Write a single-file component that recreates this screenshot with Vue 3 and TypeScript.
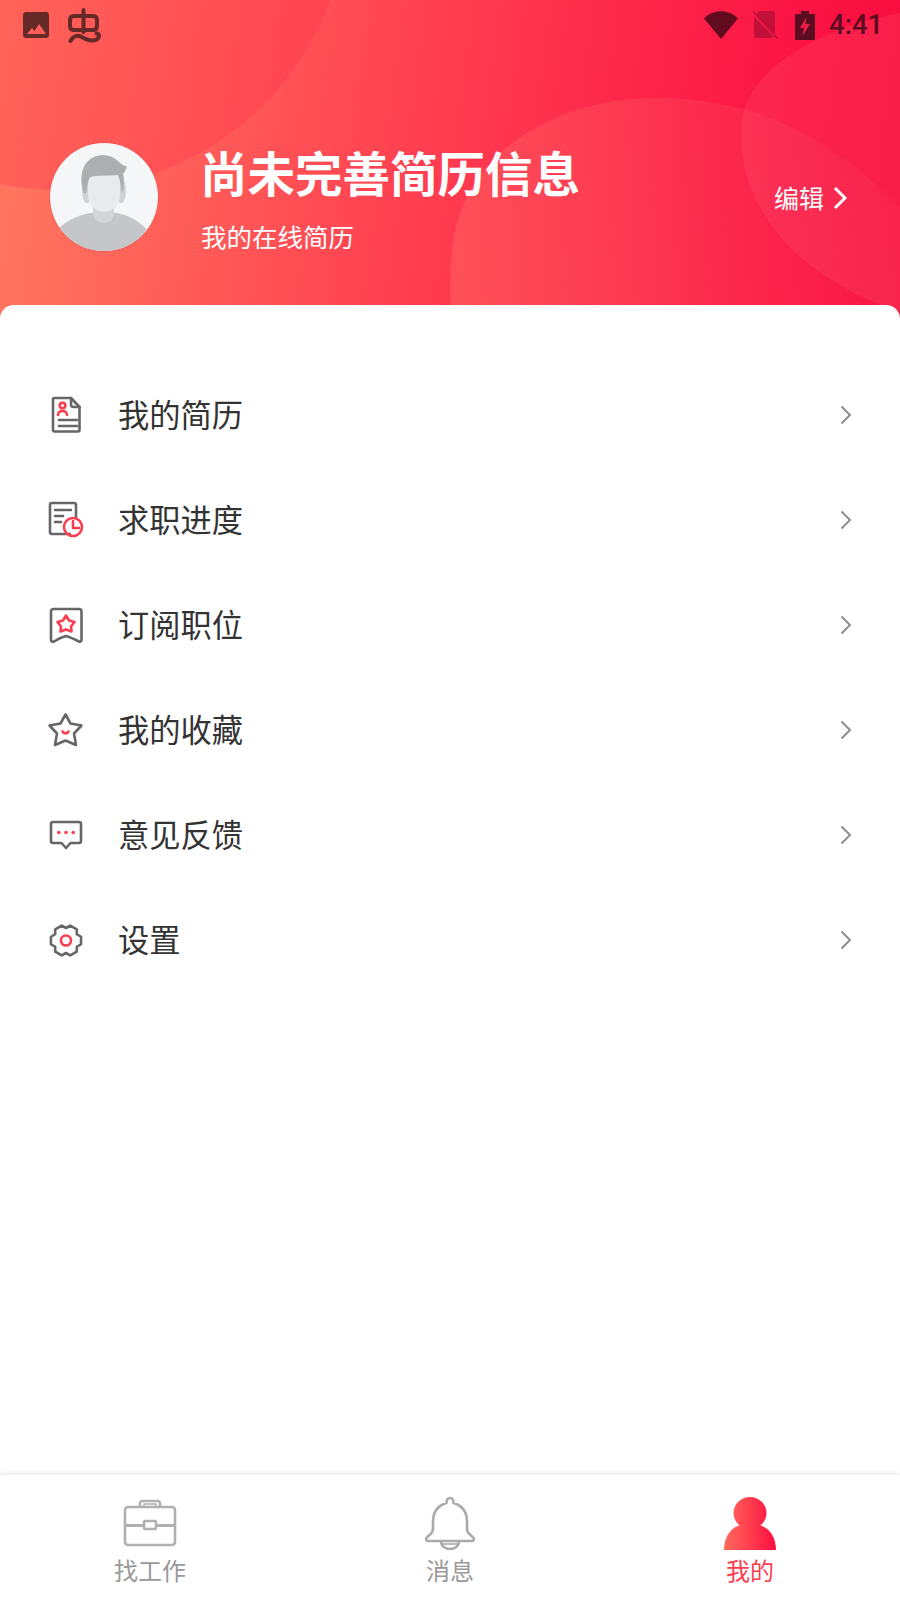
<script setup lang="ts">
const menu = [
  { key: 'resume', label: '我的简历' },
  { key: 'progress', label: '求职进度' },
  { key: 'subscribe', label: '订阅职位' },
  { key: 'favorite', label: '我的收藏' },
  { key: 'feedback', label: '意见反馈' },
  { key: 'settings', label: '设置' },
];

// six-tooth gear outline
const gearPath = (() => {
  const pts: string[] = [];
  for (let i = 0; i < 6; i++) {
    const a = i * 60;
    for (const [da, r] of [[-14, 15.5], [14, 15.5], [30, 12.5]]) {
      const rad = ((a + da) * Math.PI) / 180;
      pts.push(`${(20 + r * Math.cos(rad)).toFixed(2)} ${(20.5 + r * Math.sin(rad)).toFixed(2)}`);
    }
  }
  return 'M' + pts.join('L') + 'Z';
})();
</script>

<template>
  <div class="page">
    <header class="header">
      <svg class="blobs" width="900" height="320" viewBox="0 0 900 320">
        <defs>
          <linearGradient id="blobB" x1="0" y1="0.6" x2="1" y2="0.4">
            <stop offset="0" stop-color="#ff8a70" stop-opacity="0.28" />
            <stop offset="1" stop-color="#ff8a80" stop-opacity="0.05" />
          </linearGradient>
        </defs>
        <circle cx="58" cy="-100" r="290" fill="#ff2a4c" fill-opacity="0.28" />
        <path d="M452 320C446 250 452 190 510 145C570 98 650 88 735 107C800 122 860 165 900 208V320Z" fill="url(#blobB)" />
        <path d="M900 13C830 26 760 60 744 110C732 170 760 225 810 265C840 288 870 302 900 312Z" fill="#ff8a90" fill-opacity="0.13" />
      </svg>

      <div class="status">
        <svg class="st-image" width="26" height="26" viewBox="0 0 26 26">
          <path d="M3 0H23A3 3 0 0 1 26 3V23A3 3 0 0 1 23 26H3A3 3 0 0 1 0 23V3A3 3 0 0 1 3 0ZM4 22H23L16 12L11.500 19L9 16Z" fill="#652a28" fill-rule="evenodd" />
        </svg>
        <svg class="st-logo" width="34" height="36" viewBox="0 0 34 36">
          <g fill="none" stroke="#652a28" stroke-width="4" stroke-linecap="round" stroke-linejoin="round">
            <path d="M15.500 2V24" />
            <path d="M6 8H25C27.500 8 29 9.500 29 12V18C29 20.500 27.500 22 25 22H6C3.500 22 2 20.500 2 18V12C2 9.500 3.500 8 6 8Z" />
            <path d="M2.500 33C5 28.500 9 26.500 13 28.500C18 31.500 24 34 28.500 31.500C32 29.500 31.500 25.500 28.500 25.500" />
          </g>
        </svg>
        <span class="st-spacer"></span>
        <svg width="34" height="28" viewBox="0 0 34 28">
          <path d="M0 7.500C9.500 -2.200 24.500 -2.200 34 7.500L17 28Z" fill="#620b1f" />
        </svg>
        <svg class="st-sim" width="26" height="30" viewBox="0 0 26 30">
          <path d="M7 1H19A3 3 0 0 1 22 4V24L3 5.500L4.500 3A3 3 0 0 1 7 1ZM1 6.500L20 26C19.500 27 18.500 28 18 28H4A3 3 0 0 1 1 25Z" fill="#c1103a" />
          <path d="M0 1L25 29" stroke="#c1103a" stroke-width="1.500" />
        </svg>
        <svg class="st-batt" width="20" height="29" viewBox="0 0 20 29">
          <path d="M6 0H14V3H19A1 1 0 0 1 20 4V28A1 1 0 0 1 19 29H1A1 1 0 0 1 0 28V4A1 1 0 0 1 1 3H6Z" fill="#5a0d20" />
          <path d="M11.500 6L5 17H9L7.500 25L15 13H10.500Z" fill="#ef1c48" />
        </svg>
        <span class="st-time">4:41</span>
      </div>

      <div class="profile">
        <div class="avatar">
          <svg width="108" height="108" viewBox="0 0 108 108">
            <defs>
              <clipPath id="avatarClip"><circle cx="54" cy="54" r="54" /></clipPath>
            </defs>
            <g clip-path="url(#avatarClip)">
              <rect width="108" height="108" fill="#f4f6f8" />
              <path d="M10 84C24 72 38 70 54 68C72 70 86 74 98 88V108H10Z" fill="#c4c6c9" />
              <path d="M43 60H64V70C64 76 59 80 54 80C48 80 43 76 43 70Z" fill="#d4d5d7" />
              <ellipse cx="37" cy="48" rx="5" ry="12" fill="#d0d1d3" />
              <ellipse cx="71" cy="48" rx="5" ry="12" fill="#d0d1d3" />
              <path d="M38 28H70V52C70 62 62 69 54 69C46 69 38 62 38 52Z" fill="#e9eaec" />
              <path d="M34 50C30 40 30 26 38 18C46 10 60 10 68 18C71 21 75 24 77 23C76 27 74 30 73 31C75 38 74 46 72 50C71 44 70 36 68 32C60 33 46 32 40 34C38 38 37 44 36 50Z" fill="#adaeb0" />
            </g>
          </svg>
        </div>
        <div class="profile-text">
          <div class="title">尚未完善简历信息</div>
          <div class="sub">我的在线简历</div>
        </div>
        <div class="edit">
          <span class="edit-label">编辑</span>
          <svg width="14" height="24" viewBox="0 0 14 24">
            <path d="M2 2L12 12L2 22" fill="none" stroke="#fff" stroke-width="3" />
          </svg>
        </div>
      </div>
    </header>

    <main class="card">
      <div v-for="item in menu" :key="item.key" class="row">
        <svg class="row-icon" width="40" height="40" viewBox="0 0 40 40" fill="none" stroke="#666" stroke-width="2.600" stroke-linecap="round" stroke-linejoin="round">
          <template v-if="item.key === 'resume'">
            <path d="M25 3H8.500A1.500 1.500 0 0 0 7 4.500V35A1.500 1.500 0 0 0 8.500 36.500H32A1.500 1.500 0 0 0 33.500 35V12Z" />
            <path d="M25 3V9.500A2.500 2.500 0 0 0 27.500 12H33.500" />
            <path d="M13 25H31M13 31H31" />
            <circle cx="16.500" cy="10.500" r="2.800" stroke="#fa3e50" />
            <path d="M12 20C12 14.500 21 14.500 21 20" stroke="#fa3e50" />
          </template>
          <template v-else-if="item.key === 'progress'">
            <path d="M24 34H6A2 2 0 0 1 4 32V5A2 2 0 0 1 6 3H28A2 2 0 0 1 30 5V18" />
            <path d="M9 10H25M9 16H17M9 22H15" />
            <circle cx="27" cy="27" r="9" stroke="#fa3e50" />
            <path d="M27 21V28H33" stroke="#fa3e50" />
          </template>
          <template v-else-if="item.key === 'subscribe'">
            <path d="M8 4H33A2.500 2.500 0 0 1 35.500 6.500V35C35.500 36.500 34 37 33 36.500C29 34.500 24 32 20 31C16 32 11 34.500 8 36.500C6.500 37 5 36.500 5 35V6.500A2.500 2.500 0 0 1 8 4Z" />
            <path d="M20 10.500L23 15.500L28.500 17L25 21.500L25.500 26.500L20 24.500L14.500 26.500L15 21.500L11.500 17L17 15.500Z" stroke="#fa3e50" />
          </template>
          <template v-else-if="item.key === 'favorite'">
            <path d="M19.500 4.500L24.500 13.500L35.500 15.500L28 23.500L30 35L19.500 30.500L9 35L11 23.500L3.500 15.500L14.500 13.500Z" />
            <path d="M16.500 21.500C17.500 24 21.500 24 22.500 21.500" stroke="#fa3e50" />
          </template>
          <template v-else-if="item.key === 'feedback'">
            <path d="M7 7H33A2 2 0 0 1 35 9V26A2 2 0 0 1 33 28H24.500L20 33L15.500 28H7A2 2 0 0 1 5 26V9A2 2 0 0 1 7 7Z" />
            <g fill="#fa3e50" stroke="none">
              <circle cx="12.800" cy="17.500" r="1.800" />
              <circle cx="20" cy="17.500" r="1.800" />
              <circle cx="27.200" cy="17.500" r="1.800" />
            </g>
          </template>
          <template v-else>
            <path :d="gearPath" />
            <circle cx="20" cy="20.500" r="5" stroke="#fa3e50" />
          </template>
        </svg>
        <span class="row-label">{{ item.label }}</span>
        <svg class="row-arrow" width="12" height="20" viewBox="0 0 12 20">
          <path d="M1.500 1.500L10 10L1.500 18.500" fill="none" stroke="#8d8d8d" stroke-width="2" />
        </svg>
      </div>
    </main>

    <nav class="tabbar">
      <div class="tab">
        <svg width="56" height="54" viewBox="0 0 56 54" fill="none" stroke="#b0b0b0" stroke-width="2.600" stroke-linejoin="round">
          <path d="M6 11H50A3 3 0 0 1 53 14V46A3 3 0 0 1 50 49H6A3 3 0 0 1 3 46V14A3 3 0 0 1 6 11Z" />
          <path d="M3 29.500H22M34 29.500H53" stroke-width="3" />
          <rect x="22" y="25" width="12" height="8" rx="1" />
          <path d="M18 11V7.500A2.500 2.500 0 0 1 20.500 5H35.500A2.500 2.500 0 0 1 38 7.500V11" />
          <rect x="22" y="8" width="12" height="3" stroke-width="1.400" />
        </svg>
        <span class="tab-label">找工作</span>
      </div>
      <div class="tab">
        <svg width="56" height="54" viewBox="0 0 56 54" fill="none" stroke="#aaa" stroke-width="2.600" stroke-linejoin="round">
          <path d="M28 2C25.500 2 24.500 4 24.500 7C16 9.500 11 16 11 26V33C11 38 6 39 4.500 42C3.500 44 4.500 45 6.500 45H49.500C51.500 45 52.500 44 51.500 42C50 39 45 38 45 33V26C45 16 40 9.500 31.500 7C31.500 4 30.500 2 28 2Z" />
          <path d="M19 45C19 50 23 53 28 53C33 53 37 50 37 45" />
          <path d="M20 48H36" stroke-width="1.600" />
        </svg>
        <span class="tab-label">消息</span>
      </div>
      <div class="tab active">
        <svg width="56" height="54" viewBox="0 0 56 54">
          <defs>
            <linearGradient id="personFill" gradientUnits="userSpaceOnUse" x1="2" y1="0" x2="54" y2="0">
              <stop offset="0" stop-color="#ff6a5c" />
              <stop offset="1" stop-color="#fc0f40" />
            </linearGradient>
          </defs>
          <ellipse cx="28" cy="17" rx="16.500" ry="16" fill="url(#personFill)" />
          <path d="M2 54C2 40 10 30 20 29H36C46 30 54 40 54 54Z" fill="url(#personFill)" />
        </svg>
        <span class="tab-label">我的</span>
      </div>
    </nav>
  </div>
</template>

<style scoped>
.page {
  display: flex;
  flex-direction: column;
  width: 900px;
  height: 1600px;
  overflow: hidden;
  background: #fff;
  font-family: "Noto Sans CJK SC", "Noto Sans", sans-serif;
}

.header {
  position: relative;
  height: 320px;
  flex-shrink: 0;
  color: #fff;
  background: linear-gradient(98deg, #ff7a60 0%, #ff3d50 48%, #fb1444 85%, #f60c3e 100%);
}

.blobs {
  position: absolute;
  left: 0;
  top: 0;
}

.status {
  position: relative;
  display: flex;
  align-items: center;
  height: 50px;
  padding: 0 18px 0 23px;
  box-sizing: border-box;
}

.st-logo {
  margin-left: 19px;
  margin-top: 2px;
}

.st-spacer {
  flex: 1;
}

.st-sim {
  margin-left: 15px;
}

.st-batt {
  margin-left: 16px;
}

.st-time {
  margin-left: 14px;
  width: 53px;
  font-family: Roboto, sans-serif;
  font-size: 27.500px;
  font-weight: 500;
  line-height: 50px;
  color: #5c0c20;
}

.profile {
  position: relative;
  display: flex;
  align-items: flex-start;
  margin-top: 92px;
  padding: 0 53px 0 49px;
}

.avatar {
  display: flex;
  width: 108px;
  height: 108px;
  border: 1.500px solid rgba(220, 80, 80, 0.6);
  border-radius: 50%;
}

.profile-text {
  margin-left: 41px;
}

.title {
  font-size: 47.500px;
  font-weight: 700;
  line-height: 60px;
}

.sub {
  margin-top: 16px;
  margin-left: 1px;
  font-size: 25.500px;
  line-height: 36px;
}

.edit {
  display: flex;
  align-self: center;
  align-items: center;
  gap: 9px;
  margin-left: auto;
  font-size: 25px;
  line-height: 36px;
}

.edit-label {
  margin-top: -3px;
}

.card {
  position: relative;
  flex: 1;
  margin-top: -15px;
  padding-top: 57px;
  background: #fff;
  border-radius: 14px 14px 0 0;
}

.row {
  display: flex;
  align-items: center;
  height: 105px;
  padding: 0 48px 0 46px;
}

.row-icon {
  flex-shrink: 0;
}

.row-label {
  margin-left: 32px;
  margin-top: -2px;
  font-size: 31.250px;
  color: #333;
}

.row-arrow {
  margin-left: auto;
}

.tabbar {
  position: relative;
  display: grid;
  grid-template-columns: repeat(3, 1fr);
  flex-shrink: 0;
  height: 125px;
  padding-top: 21px;
  box-sizing: border-box;
  background: #fff;
  box-shadow: 0 -1px 5px rgba(0, 0, 0, 0.12);
}

.tab {
  display: flex;
  flex-direction: column;
  align-items: center;
}

.tab-label {
  margin-top: 5px;
  font-size: 24px;
  line-height: 30px;
  color: #999;
}

.tab.active .tab-label {
  color: #fa3e50;
}
</style>
